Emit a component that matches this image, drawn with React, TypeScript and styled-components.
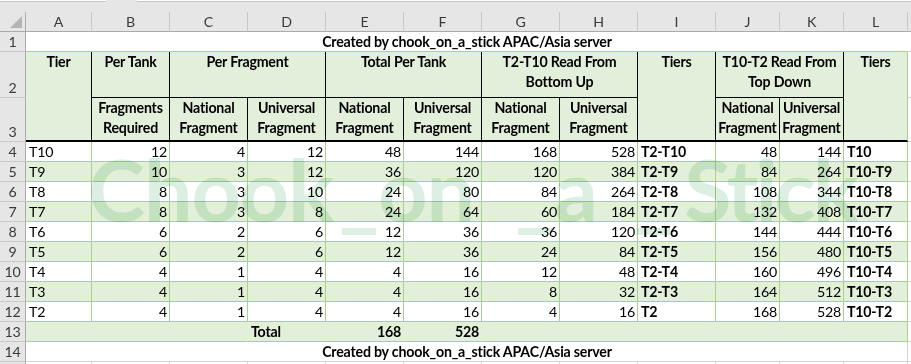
import React from 'react';
import styled, { createGlobalStyle } from 'styled-components';

const GREEN = '#e2efda';
const LINE = '#a9d08e';
const GRID = '#d4d4d4';
const BLACK = '#000';

const GlobalStyle = createGlobalStyle`
  html, body {
    margin: 0;
    padding: 0;
    background: #fff;
  }
  body {
    font-family: Lato, "Liberation Sans", sans-serif;
    font-size: 14.2px;
    letter-spacing: -0.2px;
    color: #000;
  }
`;

const Window = styled.div`
  position: relative;
  width: 911px;
  height: 364px;
  overflow: hidden;
  background: #e6e6e6;
`;

const FormulaStrip = styled.div`
  display: flex;
  height: 12px;
  gap: 31px;
`;

const FormulaBox = styled.div<{ $w: string }>`
  flex: ${(p) => p.$w};
  height: 1px;
  background: #fff;
  border-bottom: 1px solid #c6c6c6;
`;

const Sheet = styled.div`
  display: grid;
  grid-template-columns: 26px 66px repeat(8, 78px) repeat(3, 64px) 1fr;
  grid-template-rows: 20px 20px 46px 44px repeat(11, 20px) 20px;
`;

interface PlaceProps {
  $col: string | number;
  $row: string | number;
}

const Place = styled.div<PlaceProps>`
  grid-column: ${(p) => p.$col};
  grid-row: ${(p) => p.$row};
  box-sizing: border-box;
  min-width: 0;
  white-space: nowrap;
  overflow: hidden;
`;

const ColHeader = styled(Place)`
  background: #e6e6e6;
  border-right: 1px solid #c8c8c8;
  border-bottom: 1px solid #ababab;
  color: #3a3a3a;
  text-align: center;
  line-height: 19px;
`;

const Corner = styled(Place)`
  background: #e6e6e6;
  border-right: 1px solid #ababab;
  border-bottom: 1px solid #ababab;
  display: flex;
  justify-content: flex-end;
  align-items: flex-end;
  padding: 0 3px 3px 0;
`;

const RowHeader = styled(Place)`
  background: #e6e6e6;
  border-right: 1px solid #ababab;
  border-bottom: 1px solid #c8c8c8;
  color: #3a3a3a;
  display: flex;
  align-items: flex-end;
  justify-content: center;
  line-height: 19px;
`;

interface CellProps extends PlaceProps {
  $bg?: string;
  $right?: string;
  $bottom?: string;
  $bottomW?: number;
  $align?: 'left' | 'right' | 'center';
  $bold?: boolean;
}

const Cell = styled(Place)<CellProps>`
  background: ${(p) => p.$bg || '#fff'};
  border-right: 1px solid ${(p) => p.$right || 'transparent'};
  border-bottom: ${(p) => p.$bottomW || 1}px solid ${(p) => p.$bottom || 'transparent'};
  display: flex;
  align-items: flex-end;
  justify-content: ${(p) =>
    p.$align === 'right' ? 'flex-end' : p.$align === 'center' ? 'center' : 'flex-start'};
  padding: 0 2px 0 3px;
  line-height: 19px;
  font-weight: ${(p) => (p.$bold ? 700 : 400)};
`;

const HeadCell = styled(Cell)`
  align-items: flex-start;
  text-align: center;
  line-height: 20px;
  font-weight: 700;
  padding: 0 1px;
`;

const Watermark = styled.div`
  position: absolute;
  left: 88px;
  top: 146px;
  display: flex;
  font-family: Lato, "Liberation Sans", sans-serif;
  font-weight: 700;
  font-size: 86px;
  letter-spacing: -1px;
  line-height: 1;
  white-space: nowrap;
  color: #dcefe2;
  mix-blend-mode: multiply;
  pointer-events: none;
`;

const MarkPiece = styled.span<{ $w?: number; $tight?: boolean }>`
  flex: 0 0 ${(p) => (p.$w ? `${p.$w}px` : 'auto')};
  letter-spacing: ${(p) => (p.$tight ? '-3px' : '-1px')};
`;

const TITLE = 'Created by chook_on_a_stick APAC/Asia server';

const rows: (string | number)[][] = [
  ['T10', 12, 4, 12, 48, 144, 168, 528, 'T2-T10', 48, 144, 'T10'],
  ['T9', 10, 3, 12, 36, 120, 120, 384, 'T2-T9', 84, 264, 'T10-T9'],
  ['T8', 8, 3, 10, 24, 80, 84, 264, 'T2-T8', 108, 344, 'T10-T8'],
  ['T7', 8, 3, 8, 24, 64, 60, 184, 'T2-T7', 132, 408, 'T10-T7'],
  ['T6', 6, 2, 6, 12, 36, 36, 120, 'T2-T6', 144, 444, 'T10-T6'],
  ['T5', 6, 2, 6, 12, 36, 24, 84, 'T2-T5', 156, 480, 'T10-T5'],
  ['T4', 4, 1, 4, 4, 16, 12, 48, 'T2-T4', 160, 496, 'T10-T4'],
  ['T3', 4, 1, 4, 4, 16, 8, 32, 'T2-T3', 164, 512, 'T10-T3'],
  ['T2', 4, 1, 4, 4, 16, 4, 16, 'T2', 168, 528, 'T10-T2'],
];

const letters = ['A', 'B', 'C', 'D', 'E', 'F', 'G', 'H', 'I', 'J', 'K', 'L', ''];

// watermark pieces with the width each one takes in the row
const markPieces: [string, number?][] = [
  ['Chook', 251],
  ['_', 14],
  ['on', 137],
  ['_', 16],
  ['a', 79],
  ['_', 51],
  ['Stick'],
];

function Filler({ row }: { row: number }) {
  return <Cell $col={14} $row={row} $bottom={GRID} />;
}

export default function App() {
  return (
    <Window>
      <GlobalStyle />
      <FormulaStrip>
        <FormulaBox $w="0 0 106px" />
        <FormulaBox $w="1" />
      </FormulaStrip>
      <Sheet>
        <Corner $col={1} $row={1}>
          <svg width="12" height="12" viewBox="0 0 12 12">
            <polygon points="12,0 12,12 0,12" fill="#b4b4b4" />
          </svg>
        </Corner>
        {letters.map((l, i) => (
          <ColHeader key={i} $col={i + 2} $row={1}>
            {l}
          </ColHeader>
        ))}

        {Array.from({ length: 15 }, (_, i) => (
          <RowHeader key={i} $col={1} $row={i + 2}>
            {i < 14 ? i + 1 : ''}
          </RowHeader>
        ))}

        {/* row 1 */}
        <Cell $col="2 / 14" $row={2} $bottom={LINE} $align="center" $bold>
          {TITLE}
        </Cell>
        <Filler row={2} />

        {/* rows 2-3: headings */}
        <HeadCell $col={2} $row="3 / 5" $bg={GREEN} $right={BLACK} $bottom={BLACK} $bottomW={2} $align="center">
          Tier
        </HeadCell>
        <HeadCell $col={3} $row={3} $bg={GREEN} $right={BLACK} $bottom={BLACK} $align="center">
          Per Tank
        </HeadCell>
        <HeadCell $col="4 / 6" $row={3} $bg={GREEN} $right={BLACK} $bottom={BLACK} $align="center">
          Per Fragment
        </HeadCell>
        <HeadCell $col="6 / 8" $row={3} $bg={GREEN} $right={BLACK} $bottom={BLACK} $align="center">
          Total Per Tank
        </HeadCell>
        <HeadCell $col="8 / 10" $row={3} $bg={GREEN} $right={BLACK} $bottom={BLACK} $align="center">
          T2-T10 Read From
          <br />
          Bottom Up
        </HeadCell>
        <HeadCell $col={10} $row="3 / 5" $bg={GREEN} $right={BLACK} $bottom={BLACK} $bottomW={2} $align="center">
          Tiers
        </HeadCell>
        <HeadCell $col="11 / 13" $row={3} $bg={GREEN} $right={BLACK} $bottom={BLACK} $align="center">
          T10-T2 Read From
          <br />
          Top Down
        </HeadCell>
        <HeadCell $col={13} $row="3 / 5" $bg={GREEN} $right={LINE} $bottom={BLACK} $bottomW={2} $align="center">
          Tiers
        </HeadCell>
        <Filler row={3} />

        <HeadCell $col={3} $row={4} $bg={GREEN} $right={BLACK} $bottom={BLACK} $bottomW={2} $align="center">
          Fragments
          <br />
          Required
        </HeadCell>
        {[4, 5, 6, 7, 8, 9, 11, 12].map((c, i) => (
          <HeadCell key={c} $col={c} $row={4} $bg={GREEN} $right={BLACK} $bottom={BLACK} $bottomW={2} $align="center">
            {i % 2 === 0 ? 'National' : 'Universal'}
            <br />
            Fragment
          </HeadCell>
        ))}
        <Filler row={4} />

        {/* data rows */}
        {rows.map((r, ri) =>
          r.map((v, ci) => {
            const text = typeof v === 'string';
            return (
              <Cell
                key={`${ri}-${ci}`}
                $col={ci + 2}
                $row={ri + 5}
                $bg={ri % 2 === 1 ? GREEN : '#fff'}
                $right={LINE}
                $bottom={LINE}
                $align={text ? 'left' : 'right'}
                $bold={ci === 8 || ci === 11}
              >
                {v}
              </Cell>
            );
          })
        )}
        {rows.map((_, ri) => (
          <Filler key={ri} row={ri + 5} />
        ))}

        {/* row 13: totals */}
        <Cell $col="2 / 5" $row={14} $bg={GREEN} $bottom={LINE} />
        <Cell $col={5} $row={14} $bg={GREEN} $bottom={LINE} $bold>
          Total
        </Cell>
        <Cell $col={6} $row={14} $bg={GREEN} $bottom={LINE} $align="right" $bold>
          168
        </Cell>
        <Cell $col={7} $row={14} $bg={GREEN} $bottom={LINE} $align="right" $bold>
          528
        </Cell>
        <Cell $col="8 / 14" $row={14} $bg={GREEN} $bottom={LINE} $right={LINE} />
        <Filler row={14} />

        {/* row 14 */}
        <Cell $col="2 / 14" $row={15} $bottom={GRID} $right={GRID} $align="center" $bold>
          {TITLE}
        </Cell>
        <Filler row={15} />

        {/* row 15 */}
        {letters.map((l, i) => (
          <Cell key={i} $col={i + 2} $row={16} $right={GRID} $bottom={GRID} />
        ))}
      </Sheet>
      <Watermark>
        {markPieces.map(([t, w], i) => (
          <MarkPiece key={i} $w={w} $tight={t === 'Stick'}>
            {t}
          </MarkPiece>
        ))}
      </Watermark>
    </Window>
  );
}
